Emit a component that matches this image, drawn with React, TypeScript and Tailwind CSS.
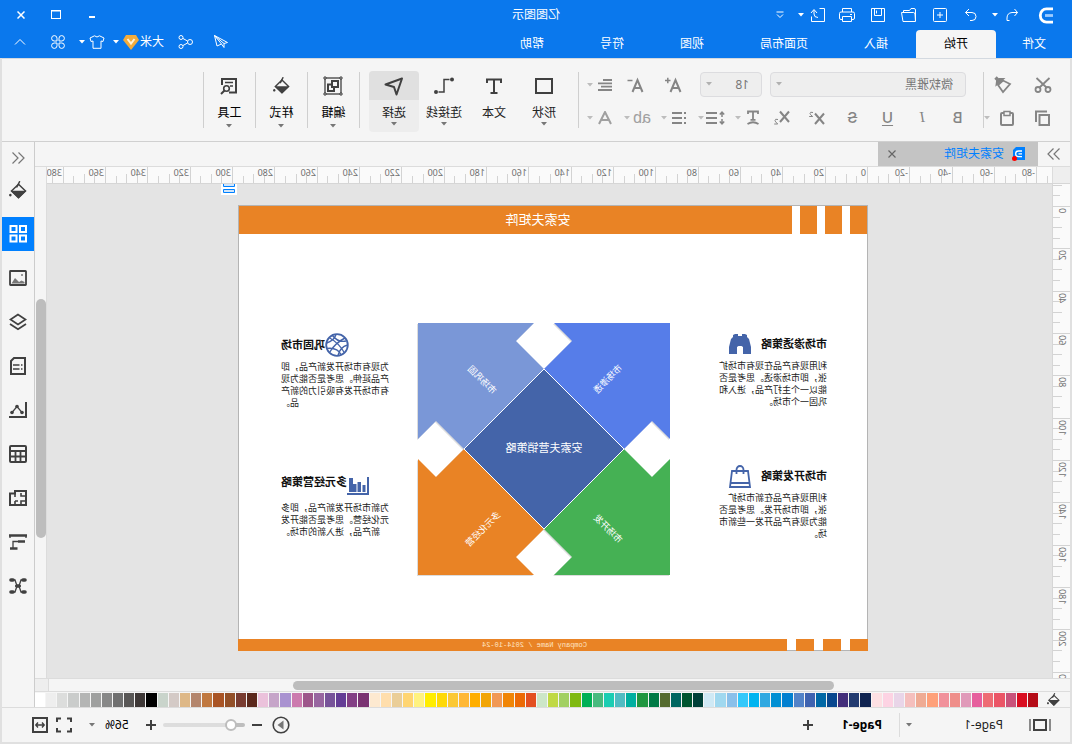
import type { ReactNode } from "react";

interface IconProps {
  w?: number;
  h?: number;
  sw?: number;
  children: ReactNode;
}

function Icon({ w = 16, h = 16, sw = 1, children }: IconProps) {
  return (
    <svg width={w} height={h} viewBox={`0 0 ${w} ${h}`} fill="none" stroke="currentColor" strokeWidth={sw} className="shrink-0" aria-hidden="true">
      {children}
    </svg>
  );
}

function Caret({ className = "" }: { className?: string }) {
  return (
    <svg width="6" height="4" viewBox="0 0 6 4" fill="currentColor" className={`shrink-0 ${className}`} aria-hidden="true">
      <path d="M0 0H6L3 3.5Z" />
    </svg>
  );
}

function BucketIcon({ w = 18 }: { w?: number }) {
  return (
    <svg width={w} height={w} viewBox="0 0 18 18" fill="none" stroke="currentColor" strokeWidth="1.5" className="shrink-0" aria-hidden="true">
      <path d="M8.5 3.2L15.5 10L8.5 16.8L1.5 10Z" />
      <path d="M2.5 10.5H14.5L8.5 16.5Z" fill="currentColor" />
      <path d="M7.2 0.2L10.4 6.5" />
      <path d="M16.6 12.8a1.3 1.3 0 1 0 .1 0z" fill="currentColor" stroke="none" />
    </svg>
  );
}

/* ---------- title bar ---------- */

const fileActions: { label: string; icon: ReactNode }[] = [
  { label: "重做", icon: <Icon><path d="M10 2L13.5 5.5L10 9M13.5 5.5H7A4 4 0 0 0 7 13.5H9" /></Icon> },
  { label: "新建", icon: <Icon><rect x="1.5" y="1.5" width="13" height="13" rx="1" /><path d="M8 5V11M5 8H11" /></Icon> },
  { label: "打开", icon: <Icon><path d="M1.5 14V3Q1.5 1.5 3 1.5H6L7.5 3.5H13.5V5.5M1.5 14.5L2 7Q2.2 5.5 3.5 5.5H15.5L14 14.5Z" /></Icon> },
  { label: "保存", icon: <Icon><path d="M1.5 1.5H14.5V14.5H1.5ZM4.5 2V8.5H11.5V2M9.5 3.5V6.5" /></Icon> },
  { label: "打印", icon: <Icon><path d="M3.5 5V1.5H12.5V5M3.5 12.5H2Q0.5 12.5 0.5 11V6.5Q0.5 5 2 5H14Q15.5 5 15.5 6.5V11Q15.5 12.5 14 12.5H12.5M3.5 9.5H12.5V14.5H3.5ZM3 7.5H5" /></Icon> },
];

function TitleBar() {
  return (
    <div className="grid h-[30px] grid-cols-[1fr_auto_1fr] items-center">
      <div className="flex items-center">
        <svg width="16" height="17" viewBox="0 0 16 17" fill="none" stroke="#fff" strokeWidth="2.8" className="ml-[18px]" aria-label="Edraw">
          <path d="M1 1.9H7.5A6.2 6.6 0 0 1 7.5 15.1H1" />
          <path d="M1 8.5H9" stroke="#9ccbff" />
        </svg>
        <button className="ml-4 flex h-6 w-5 items-center justify-center" aria-label="撤销">
          <Icon w={14} h={16}><path d="M4.5 2L1.5 5.5L4.5 9M1.5 5.5H7Q12 6 12 11V13.5H9.5" /></Icon>
        </button>
        <button className="ml-1 h-6" aria-label="撤销列表"><Caret /></button>
        <span className="w-[5px]" />
        {fileActions.map((a) => (
          <button key={a.label} className="flex h-6 w-[31px] items-center justify-center" aria-label={a.label}>
            {a.icon}
          </button>
        ))}
        <button className="flex h-6 w-7 items-center justify-center" aria-label="导出">
          <Icon><path d="M6.5 1.5H1.5V14.5H14.5V9.5M9 6L12 2.5L15 6M12 3V7Q12 10.5 8 10.5" /></Icon>
        </button>
        <button aria-label="导出选项"><Caret /></button>
        <button className="ml-2 flex h-6 w-5 items-center justify-center" aria-label="自定义">
          <Icon w={8} h={8}><path d="M0.5 1H7.5M1 3.5L4 6.5L7 3.5" /></Icon>
        </button>
      </div>
      <h1 className="text-xs">亿图图示</h1>
      <div className="flex justify-end pr-1">
        <button className="flex h-6 w-9 items-center justify-center" aria-label="最小化">
          <Icon w={8} h={8} sw={2}><path d="M1 6H7" /></Icon>
        </button>
        <button className="flex h-6 w-9 items-center justify-center" aria-label="最大化">
          <Icon w={10} h={10}><rect x="0.5" y="0.5" width="9" height="8" /><path d="M0 1H10" /></Icon>
        </button>
        <button className="flex h-6 w-[34px] items-center justify-center" aria-label="关闭">
          <Icon w={8} h={8} sw={1.5}><path d="M0.5 0.5L7.5 7.5M7.5 0.5L0.5 7.5" /></Icon>
        </button>
      </div>
    </div>
  );
}

const menus = ["文件", "开始", "插入", "页面布局", "视图", "符号", "帮助"];

function MenuBar() {
  return (
    <nav className="flex h-7 justify-between text-xs">
      <div className="flex">
        {menus.map((m) => (
          <button
            key={m}
            className={m === "开始" ? "rounded-t-sm bg-[#f5f5f5] px-7 text-black" : m === "文件" ? "w-[76px]" : "px-7"}
          >
            {m}
          </button>
        ))}
      </div>
      <div className="flex h-6 items-center">
        <button className="flex w-[35px] justify-center" aria-label="发送">
          <Icon w={14} h={14}><path d="M13.5 0.5L0.5 7.5L4 8.5L13.5 0.5L11 11L6.5 9L13.5 0.5M4 8.5V12.5L6.5 9" /></Icon>
        </button>
        <button className="flex w-[35px] justify-center" aria-label="分享">
          <Icon w={15} h={14}><circle cx="3" cy="7" r="2.5" /><circle cx="12" cy="2.5" r="2" /><circle cx="12" cy="11.5" r="2" /><path d="M5.5 6L10 3.5M5.5 8L10 10.5" /></Icon>
        </button>
        <button className="ml-1 flex items-center">
          大米
          <svg width="16" height="15" viewBox="0 0 16 15" className="ml-px" aria-hidden="true">
            <path d="M3 0H13L16 5L8 15L0 5Z" fill="#f3ac3c" />
            <path d="M4.5 4L8 8.5L11.5 4" fill="none" stroke="#fff3d8" strokeWidth="2" />
          </svg>
          <Caret className="ml-1" />
        </button>
        <button className="ml-2 flex items-center" aria-label="主题">
          <Icon w={16} h={14}><path d="M5.5 0.8L1 3L2 6.5L4 6V13.3H12V6L14 6.5L15 3L10.5 0.8Q8 3.2 5.5 0.8Z" /></Icon>
          <Caret className="ml-1" />
        </button>
        <button className="ml-1 flex w-[34px] justify-center" aria-label="应用">
          <Icon w={14} h={14}>
            <path d="M6 6H3.2A2.7 2.7 0 1 1 6 3.2ZM8 6H10.8A2.7 2.7 0 1 0 8 3.2ZM6 8H3.2A2.7 2.7 0 1 0 6 10.8ZM8 8H10.8A2.7 2.7 0 1 1 8 10.8Z" />
          </Icon>
        </button>
        <button className="flex w-[41px] justify-center" aria-label="收起功能区">
          <Icon w={12} h={8}><path d="M1 6.5L6 1.5L11 6.5" /></Icon>
        </button>
      </div>
    </nav>
  );
}

/* ---------- ribbon ---------- */

function Divider() {
  return <div className="mt-[13px] h-14 w-px shrink-0 bg-[#cfcfcf]" />;
}

function Split({ label, children }: { label: string; children: ReactNode }) {
  return (
    <button className="flex h-[25px] shrink-0 items-center" aria-label={label}>
      <span className="flex w-6 justify-center">{children}</span>
      <Caret className="text-[#bdbdbd]" />
    </button>
  );
}

interface ToolProps {
  label: string;
  caret?: boolean;
  active?: boolean;
  narrow?: boolean;
  children: ReactNode;
}

function Tool({ label, caret = true, active, narrow, children }: ToolProps) {
  return (
    <button className={`mt-3 flex h-[61px] shrink-0 flex-col items-center rounded-sm text-xs ${narrow ? "w-[51px] text-black" : "w-[50px] text-[#222]"} ${active ? "bg-[#ededed]" : ""}`}>
      <span className={`flex h-[29px] w-full items-center justify-center rounded-t-sm text-[#404040] ${active ? "bg-[#e0e0e0]" : ""}`}>{children}</span>
      <span className="mt-1 leading-[18px] whitespace-nowrap">{label}</span>
      {caret && <Caret className={narrow ? "mt-0.5 text-[#777]" : "text-[#777]"} />}
    </button>
  );
}

const glyph = "w-[35px] text-[15px] leading-none font-medium";

function Ribbon() {
  return (
    <div className="flex h-[84px] shrink-0 border-t border-b border-t-[#d3d9e0] border-b-[#d0d0d0] bg-[#f5f5f5] text-[#858585]">
      <div className="flex w-[86px] shrink-0 flex-col gap-2 pt-[13px] pl-[7px]">
        <div className="flex h-[25px] items-center">
          <button className="flex w-10 justify-center" aria-label="剪切">
            <Icon w={18} h={18} sw={1.8}><circle cx="4" cy="13.5" r="2.5" /><circle cx="14" cy="13.5" r="2.5" /><path d="M2.5 2L12.5 11.5M15.5 2L5.5 11.5" /></Icon>
          </button>
          <button className="flex w-[39px] justify-center" aria-label="格式刷">
            <Icon w={18} h={18} sw={1.8}><path d="M2 8L9 4.5L14 9L9 16Z" /><path d="M9 3L15.5 8.5L15 4.5L12.5 3Z" fill="currentColor" /><path d="M13.5 4.5L16.5 1.5" strokeWidth="3.4" /></Icon>
          </button>
        </div>
        <div className="flex h-[25px] items-center">
          <button className="flex w-10 justify-center" aria-label="复制">
            <Icon sw={2}><rect x="2" y="5" width="9.5" height="10" /><path d="M4 1.5H15V12" /></Icon>
          </button>
          <button className="flex w-[34px] justify-center" aria-label="粘贴">
            <Icon sw={2}><rect x="2" y="3" width="12" height="12" rx="1" /><path d="M5 1.5H11V5.5H5Z" strokeWidth="1.5" fill="#f5f5f5" /></Icon>
          </button>
          <button aria-label="粘贴选项"><Caret className="text-[#bdbdbd]" /></button>
        </div>
      </div>
      <Divider />
      <div className="flex w-[404px] shrink-0 flex-col gap-2 pt-[13px]">
        <div className="flex h-[25px] items-center pl-[17px]">
          <label className="relative flex">
            <select aria-label="字体" className="h-[25px] w-[196px] appearance-none rounded-sm border border-[#dcdcdf] bg-[#eeeeee] pl-3 text-xs text-[#777]">
              <option>微软雅黑</option>
            </select>
            <Caret className="pointer-events-none absolute top-2.5 right-1.5 text-[#b0b0b0]" />
          </label>
          <label className="relative ml-2 flex">
            <select aria-label="字号" className="h-[25px] w-[62px] appearance-none rounded-sm border border-[#dcdcdf] bg-[#eeeeee] pl-3 text-xs text-[#777]">
              <option>18</option>
            </select>
            <Caret className="pointer-events-none absolute top-2.5 right-1.5 text-[#b0b0b0]" />
          </label>
          <button className="ml-2 flex w-[37px] justify-center" aria-label="增大字号">
            <Icon w={17} h={16} sw={2}><path d="M1.5 15L6.5 3L11.5 15M3.5 11H9.5" /><path d="M11.5 3.5H17M14.2 0.8V6.2" strokeWidth="1.5" /></Icon>
          </button>
          <button className="flex w-[38px] justify-center" aria-label="减小字号">
            <Icon w={17} h={16} sw={2}><path d="M1.5 15L6.5 3L11.5 15M3.5 11H9.5" /><path d="M11.5 3.5H16.5" strokeWidth="1.5" /></Icon>
          </button>
          <Split label="对齐"><Icon w={14} h={12} sw={2}><path d="M0 1H9M0 4.3H14M0 7.6H11M0 11H14" strokeWidth="1.8" /></Icon></Split>
        </div>
        <div className="flex h-[25px] items-center pl-2 font-['Inter',sans-serif]">
          <button className={glyph} aria-label="加粗">B</button>
          <button className={`${glyph} font-['Liberation_Serif',serif] italic`} aria-label="斜体">I</button>
          <button className={`${glyph} underline underline-offset-2`} aria-label="下划线">U</button>
          <button className={`${glyph} line-through`} aria-label="删除线">S</button>
          <button className="flex w-[35px] justify-center" aria-label="上标">
            <Icon w={16} h={14} sw={2}><path d="M1 2.5L10 13M10 2.5L1 13" /><path d="M12 1.5Q15 0.5 15 2.5Q15 3.5 12.3 5.5H15.8" strokeWidth="1" /></Icon>
          </button>
          <button className="flex w-[35px] justify-center" aria-label="下标">
            <Icon w={16} h={15} sw={2}><path d="M1 1.5L10 12M10 1.5L1 12" /><path d="M12 9.5Q15 8.5 15 10.5Q15 11.5 12.3 14H15.8" strokeWidth="1" /></Icon>
          </button>
          <div className="flex gap-[7px]">
            <Split label="文字方向"><Icon w={14} h={15} sw={1.8}><path d="M2 4V1.5H12V4M7 1.5V9.5M4.5 9.8H9.5M1.5 14Q7 10.5 12.5 14" /></Icon></Split>
            <Split label="行距"><Icon w={19} h={14} sw={1.5}><path d="M8 2H19M8 7H19M8 12H19" strokeWidth="2" /><path d="M3 1V6M0.8 3.5L3 1.2L5.2 3.5M3 8V13M0.8 10.5L3 12.8L5.2 10.5" /></Icon></Split>
            <Split label="项目符号"><Icon w={14} h={12} sw={2}><path d="M0 1H2M4 1H14M0 6H2M4 6H14M0 11H2M4 11H14" /></Icon></Split>
            <Split label="高亮"><span className="font-['Liberation_Sans',sans-serif] text-base leading-none text-[#a0a0a0]">ab</span></Split>
            <Split label="字体颜色"><Icon w={14} h={14} sw={2}><path d="M1 13L7 1L13 13M3.5 9H10.5" stroke="#a0a0a0" /></Icon></Split>
          </div>
        </div>
      </div>
      <Divider />
      <div className="flex shrink-0 pr-[9px] pl-[9px]">
        <Tool label="形状"><Icon w={18} h={16} sw={2}><rect x="1" y="1" width="16" height="14" /></Icon></Tool>
        <Tool label="文本" caret={false}><Icon w={16} h={16} sw={2}><path d="M1 5V1.5H15V5M8 1.5V15M4.5 15H11.5" /></Icon></Tool>
        <Tool label="连接线">
          <Icon w={20} h={18} sw={1.5}><path d="M4.5 2.5H10V15H15.5" /><circle cx="2" cy="2.5" r="2" fill="currentColor" stroke="none" /><circle cx="18" cy="15" r="2" fill="currentColor" stroke="none" /></Icon>
        </Tool>
        <Tool label="选择" active><Icon w={20} h={20} sw={2}><path d="M2 2.5L18.5 8.5L10 11L7.5 18.5Z" strokeLinejoin="round" /></Icon></Tool>
      </div>
      <Divider />
      <Tool label="编辑" narrow>
        <Icon w={20} h={20} sw={1.3}>
          <rect x="2" y="2" width="16" height="16" />
          <path d="M5 5H11V11H5ZM12 8.5H15V15H9V12" strokeWidth="2" />
          <path d="M1 1H3V3H1ZM17 1H19V3H17ZM1 17H3V19H1ZM17 17H19V19H17Z" strokeWidth="1" fill="#f5f5f5" />
        </Icon>
      </Tool>
      <Divider />
      <Tool label="样式" narrow><BucketIcon w={17} /></Tool>
      <Divider />
      <Tool label="工具" narrow>
        <Icon w={18} h={18} sw={2}><path d="M9 15.5H2V2H16V8" /><path d="M5 5.5H13M5 9H8" strokeWidth="1.5" /><circle cx="11.5" cy="11.5" r="2.8" strokeWidth="1.6" /><path d="M13.5 13.5L17 17" /></Icon>
      </Tool>
      <Divider />
    </div>
  );
}

/* ---------- rulers ---------- */

// pixels per millimetre at the current zoom
const SCALE = 2.1165;

function range(from: number, to: number, step: number) {
  return Array.from({ length: Math.floor((to - from) / step) + 1 }, (_, i) => from + i * step);
}

function HRuler() {
  return (
    <svg className="h-4 min-w-0 flex-1" width="100%" height="16" aria-hidden="true">
      {range(-85, 600, 5).map((v) => {
        const x = Math.round(184 + v * SCALE) + 0.5;
        const top = v % 20 === 0 ? 0 : v % 10 === 0 ? 7 : 9;
        return <path key={v} d={`M${x} ${top}V16`} stroke="#d3d3d3" />;
      })}
      {range(-80, 380, 20).map((v) => (
        <text key={v} x={Math.round(184 + v * SCALE) + 2} y="9" fontSize="9" fill="#707070">{v}</text>
      ))}
    </svg>
  );
}

function VRuler() {
  return (
    <div className="relative w-[18px] shrink-0 overflow-hidden border-r border-[#d6d6d6] bg-[#fafafa]">
      <svg className="absolute inset-0" width="17" height="100%" aria-hidden="true">
        {range(-10, 500, 5).map((v) => {
          const y = Math.round(22 + v * SCALE) + 0.5;
          const left = v % 20 === 0 ? 0 : v % 10 === 0 ? 8 : 10;
          return <path key={v} d={`M${left} ${y}H17`} stroke="#d3d3d3" />;
        })}
        {range(0, 220, 20).map((v) => (
          <text key={v} transform={`translate(11 ${Math.round(22 + v * SCALE) + 2}) rotate(-90)`} textAnchor="end" fontSize="9" fill="#707070">{v}</text>
        ))}
      </svg>
    </div>
  );
}

/* ---------- slide ---------- */

function Matrix() {
  return (
    <svg width="252" height="252" viewBox="0 0 252 252" className="absolute top-[118px] left-[198px] overflow-visible" fontSize="9" fill="#fff" textAnchor="middle">
      <g fill="#dcdcdc" transform="translate(1 1)">
        <path d="M0 0H116L98 18L126 46L46 126L18 98L0 116Z" />
        <path d="M252 0H136L154 18L126 46L206 126L234 98L252 116Z" />
        <path d="M0 252H116L98 234L126 206L46 126L18 154L0 136Z" />
        <path d="M252 252H136L154 234L126 206L206 126L234 154L252 136Z" />
      </g>
      <path d="M0 0H116L98 18L126 46L46 126L18 98L0 116Z" fill="#567de9" />
      <path d="M252 0H136L154 18L126 46L206 126L234 98L252 116Z" fill="#7a97d7" />
      <path d="M0 252H116L98 234L126 206L46 126L18 154L0 136Z" fill="#45b154" />
      <path d="M252 252H136L154 234L126 206L206 126L234 154L252 136Z" fill="#e98325" />
      <path d="M126 46L206 126L126 206L46 126Z" fill="#4464a9" stroke="#fff" />
      <text x="126" y="129" fontSize="11">安索夫营销策略</text>
      <text transform="translate(62 56) rotate(45)" y="3">市场渗透</text>
      <text transform="translate(188 57) rotate(-45)" y="3">市场巩固</text>
      <text transform="translate(62 206) rotate(-45)" y="3">市场开发</text>
      <text transform="translate(187 206) rotate(45)" y="3">多元化经营</text>
    </svg>
  );
}

interface NoteProps {
  place: string;
  title: string;
  lines: string[];
  icon: ReactNode;
  right?: boolean;
  loose?: boolean;
}

function Note({ place, title, lines, icon, right, loose }: NoteProps) {
  return (
    <section className={`absolute text-[#222] ${place} ${right ? "text-right" : ""}`}>
      <div className={`flex h-6 items-center text-[#4464a9] ${right ? "justify-end" : "flex-row-reverse justify-end gap-2.5"}`}>
        {icon}
        <h3 className="text-[11px] leading-6 font-bold text-[#111]">{title}</h3>
      </div>
      <p className={`text-[9px] leading-3 whitespace-nowrap ${loose ? "mt-2" : "mt-1"}`}>
        {lines.map((l) => (
          <span key={l} className="block">{l}</span>
        ))}
      </p>
    </section>
  );
}

function Slide() {
  return (
    <article className="relative h-[446px] w-[630px] shrink-0 bg-white outline -outline-offset-1 outline-[#b4b4b4]">
      <header className="flex h-[29px] items-center gap-2 text-white">
        <span className="h-full w-[18px] bg-[#e98325]" />
        <span className="h-full w-[17px] bg-[#e98325]" />
        <span className="h-full w-[17px] bg-[#e98325]" />
        <h2 className="h-full flex-1 bg-[#e98325] pr-[46px] text-center text-[13px] leading-[29px]">安索夫矩阵</h2>
      </header>
      <Note
        place="top-[127px] left-[41px]"
        title="市场渗透策略"
        lines={["利用现有产品在现有市场扩", "张，即市场渗透。思考是否", "能以一个主打产品，进入和", "巩固一个市场。"]}
        icon={
          <svg width="22" height="20" viewBox="0 0 22 20" fill="currentColor" aria-hidden="true">
            <path d="M4 1L6 0H9V2H13V0H16L18 1V3L20 5L22 13V20H14V13L12.5 12H9.5L8 13V20H0V13L2 5L4 3Z" />
          </svg>
        }
      />
      <Note
        place="top-[259px] left-[41px]"
        title="市场开发策略"
        lines={["利用现有产品在新市场扩", "张，即市场开发。思考是否", "能为现有产品开发一些新市", "场。"]}
        icon={<Icon w={22} h={23} sw={1.8}><path d="M3 6H19L21 22H1ZM2 18H20M7.5 9V5A3.5 4 0 0 1 14.5 5V9" /></Icon>}
      />
      <Note
        right
        place="top-[128px] right-[43px]"
        title="巩固市场"
        lines={["为现有市场开发新产品，即", "产品延伸。思考是否能为现", "有市场开发有吸引力的新产", "品。"]}
        icon={
          <Icon w={24} h={24} sw={1.8}>
            <circle cx="12" cy="12" r="10.8" />
            <path d="M20 4.5Q10 10 4.5 20M4 5Q14 10 19.5 19.5M13 1.5Q15 8 22.5 10M1.5 12Q9 14 11 22.5M3 8Q11 10 17 2M7.5 22Q12 14 22 15.5" strokeWidth="1.4" />
          </Icon>
        }
      />
      <Note
        right
        loose
        place="top-[265px] right-[43px]"
        title="多元经营策略"
        lines={["为新市场开发新产品，即多", "元化经营。思考是否能开发", "新产品，进入新的市场。"]}
        icon={
          <svg width="22" height="18" viewBox="0 0 22 18" fill="currentColor" className="mt-2" aria-hidden="true">
            <path d="M0 0H2V16H22V18H0ZM3.5 8H6.5V15H3.5ZM8 5H11.5V15H8ZM12.5 7H16V15H12.5ZM16 1H20V15H16Z" />
          </svg>
        }
      />
      <Matrix />
      <footer className="absolute inset-x-0 bottom-0 flex h-3 gap-[9px]">
        <span className="w-[18px] bg-[#e98325]" />
        <span className="w-[18px] bg-[#e98325]" />
        <span className="w-[18px] bg-[#e98325]" />
        <p className="flex-1 bg-[#e98325] pr-11 text-center font-['Liberation_Mono',monospace] text-[7px] leading-3 text-[#ffe3c4]">Company Name / 2014-10-24</p>
      </footer>
    </article>
  );
}

/* ---------- right hand panel ---------- */

const panels: { label: string; icon: ReactNode }[] = [
  { label: "填充", icon: <BucketIcon /> },
  { label: "符号库", icon: <Icon w={18} h={18} sw={2}><path d="M1 1H7V7H1ZM10.5 1H16.5V7H10.5ZM1 10.5H7V16.5H1ZM10.5 10.5H16.5V16.5H10.5Z" /></Icon> },
  { label: "图片", icon: <Icon w={18} h={16} sw={1.8}><rect x="1" y="1" width="16" height="14" rx="0.5" /><path d="M2.5 13.5V12L5.5 10.5L8 12L12 8L15.5 13.5Z" fill="#777" stroke="none" /><circle cx="5" cy="5" r="1" fill="#777" stroke="none" /></Icon> },
  { label: "图层", icon: <Icon w={18} h={18} sw={1.8}><path d="M9 1.5L16.5 6.5L9 11.5L1.5 6.5Z" /><path d="M1 11L9 16.2L17 11" /></Icon> },
  { label: "页面", icon: <Icon w={16} h={18} sw={2}><path d="M1 1H12L15 4V17H1Z" /><path d="M3.5 8H5M6.5 8H13M3.5 12H5M6.5 12H13" strokeWidth="1.6" /></Icon> },
  { label: "图表", icon: <Icon w={18} h={18} sw={2}><path d="M1 1V16H18" /><path d="M5 11.5L10 5.5L15 11.5" strokeWidth="1.2" /><circle cx="5" cy="11.5" r="1.8" fill="currentColor" stroke="none" /><circle cx="10" cy="5.5" r="1.8" fill="currentColor" stroke="none" /><circle cx="15" cy="11.5" r="1.8" fill="currentColor" stroke="none" /></Icon> },
  { label: "表格", icon: <Icon w={18} h={18} sw={2}><rect x="1" y="1" width="16" height="16" rx="1" /><path d="M1 6H17M1 11.5H17M6.5 6V17M11.5 6V17" strokeWidth="1.8" /></Icon> },
  { label: "平面图", icon: <Icon w={18} h={16} sw={2}><path d="M1 1H12V3.5H17V15H1Z" /><path d="M1 6H6V3M1 11H6V15M12 1V7M12 11V15M9 11H12" strokeWidth="1.6" /></Icon> },
  { label: "甘特图", icon: <Icon w={18} h={16} sw={2.6}><path d="M0 1.5H18M2 7.5H9M9.5 14.5H17" /><path d="M9 7.5H14V14M1 1V4M17 1V4" strokeWidth="1.3" /></Icon> },
  { label: "思维导图", icon: <Icon w={18} h={16} sw={1.3}><path d="M4 2H6L8 8L6 14H4M14 2H12L10 8L12 14H14M6 8H12" /><path d="M2 2H4M14 2H16M2 14H4M14 14H16M8 8H10" strokeWidth="3.6" strokeLinecap="round" /></Icon> },
];

function SidePanel() {
  return (
    <aside className="flex w-[33px] shrink-0 flex-col border-l border-[#cccccc] bg-[#f5f5f5] text-[#404040]">
      <button className="flex h-[31px] shrink-0 items-center justify-center text-[#777]" aria-label="展开面板">
        <Icon w={14} h={12} sw={1.2}><path d="M6.5 0.5L1 6L6.5 11.5M12.5 0.5L7 6L12.5 11.5" /></Icon>
      </button>
      <div className="flex flex-col gap-2.5">
        {panels.map((p) => (
          <button
            key={p.label}
            aria-label={p.label}
            className={`flex h-[34px] items-center justify-center ${p.label === "符号库" ? "bg-[#0080ff] text-white" : ""}`}
          >
            {p.icon}
          </button>
        ))}
      </div>
    </aside>
  );
}

/* ---------- bottom bars ---------- */

const palette = [
  "#b50b16", "#d90c1f", "#c9527a", "#eb5566", "#ee6c74", "#e65f9d", "#e09ab9", "#ef8e8a", "#f1919b", "#fea07a",
  "#efab94", "#f5bfbd", "#e9d5e8", "#fdd3e3", "#fde0e3", "#0f2350", "#223a70", "#432e7a", "#08478e", "#0168a6",
  "#3f63b0", "#5383c8", "#0280d0", "#0290d3", "#2fa8e1", "#00b4f0", "#32c8fa", "#8ac0ea", "#a0d8ef", "#cfe9f5",
  "#004038", "#005530", "#006660", "#556b2f", "#007a45", "#209640", "#00afa0", "#50bcc2", "#1bcdb2", "#48ba7e",
  "#00b056", "#7fb910", "#a2d062", "#c0d945", "#cce6c8", "#e35021", "#ec6a05", "#f08505", "#f19955", "#f2a505",
  "#ffae00", "#ffb835", "#fbc833", "#ffd905", "#ffed00", "#fff280", "#ffd572", "#eace98", "#ffdeac", "#fde9d0",
  "#7a3373", "#823f84", "#643d95", "#775399", "#9866a0", "#9d568a", "#cc7aae", "#a992d0", "#c6a5c9", "#ebc2db",
  "#5a281b", "#793c30", "#935028", "#a95425", "#c0783f", "#b4866d", "#deb887", "#d4cac6", "#c9d4cb", "#000000",
  "#3e3837", "#595756", "#707070", "#888888", "#9fa09f", "#b4b5b4", "#cacccb", "#dcdddc", "#eeeeee", "#ffffff",
];

function ColorBar() {
  return (
    <div className="flex h-4 shrink-0 items-center border-t border-[#dcdcdc] bg-[#f5f5f5] text-[#404040]">
      <button className="flex w-8 shrink-0 justify-center" aria-label="填充颜色"><BucketIcon w={13} /></button>
      <div className="flex h-3.5 flex-1 gap-px">
        {palette.map((c) => (
          <button key={c} aria-label={c} className="flex-1" style={{ backgroundColor: c }} />
        ))}
      </div>
    </div>
  );
}

function StatusBar() {
  return (
    <footer className="flex h-[35px] shrink-0 items-center justify-between border-t border-[#dcdcdc] bg-[#f5f5f5] text-xs text-[#404040]">
      <div className="flex items-center">
        <button className="ml-[19px]" aria-label="页面面板">
          <Icon w={22} h={12} sw={2}><rect x="5" y="1" width="12" height="10" /><path d="M1 0V12M21 0V12" stroke="#8a8a8a" /></Icon>
        </button>
        <label className="relative ml-[22px] flex items-center">
          <select aria-label="页面" className="h-6 w-[107px] appearance-none bg-transparent pl-1 text-[#222]">
            <option>Page-1</option>
          </select>
          <Caret className="pointer-events-none absolute right-1.5 text-[#777]" />
        </label>
        <div className="h-6 w-px bg-[#dcdcdc]" />
        <button className="ml-[17px] w-[46px] text-left font-bold text-black">Page-1</button>
        <button className="ml-[23px]" aria-label="新增页面"><Icon w={10} h={10} sw={2}><path d="M5 0V10M0 5H10" /></Icon></button>
      </div>
      <div className="flex items-center">
        <button aria-label="播放">
          <Icon w={18} h={18} sw={1.6}><circle cx="9" cy="9" r="7.8" /><path d="M6.5 4.5L12.5 9L6.5 13.5Z" fill="#777" stroke="none" /></Icon>
        </button>
        <button className="ml-2.5" aria-label="缩小"><Icon w={10} h={10} sw={2}><path d="M0 5H10" /></Icon></button>
        <input
          type="range"
          aria-label="缩放"
          defaultValue={11}
          className="ml-[7px] h-1 w-[82px] appearance-none rounded-full bg-linear-to-r from-[#bdbdbd] from-15% to-[#dddddd] to-15% [&::-webkit-slider-thumb]:h-3 [&::-webkit-slider-thumb]:w-3 [&::-webkit-slider-thumb]:appearance-none [&::-webkit-slider-thumb]:rounded-full [&::-webkit-slider-thumb]:border-2 [&::-webkit-slider-thumb]:border-[#bdbdbd] [&::-webkit-slider-thumb]:bg-white"
        />
        <button className="ml-[7px]" aria-label="放大"><Icon w={10} h={10} sw={2}><path d="M5 0V10M0 5H10" /></Icon></button>
        <button className="ml-[17px] flex items-center text-black">
          56%
          <Caret className="ml-2.5 text-[#777]" />
        </button>
        <button className="ml-[17px]" aria-label="全屏"><Icon w={16} h={16} sw={2}><path d="M1 5V1.5H5M11 1.5H15V5M15 11V14.5H11M5 14.5H1V11" /></Icon></button>
        <button className="mr-[30px] ml-2" aria-label="适应宽度">
          <Icon w={16} h={16} sw={2}><rect x="1" y="1" width="14" height="14" /><path d="M4 8H12M6 5.5L3.8 8L6 10.5M10 5.5L12.2 8L10 10.5" strokeWidth="1.4" /></Icon>
        </button>
      </div>
    </footer>
  );
}

export default function App() {
  return (
    <div className="flex h-screen -scale-x-100 flex-col overflow-hidden bg-[#e0e0e0] font-['Noto_Sans','Noto_Sans_CJK_SC',sans-serif]">
      <div className="shrink-0 bg-[#0a78ed] text-white">
        <TitleBar />
        <MenuBar />
      </div>
      <div className="flex min-h-0 flex-1 flex-col border-x-2 border-b-2 border-[#e0e0e0]">
        <Ribbon />
        <div className="flex min-h-0 flex-1">
          <main className="flex min-w-0 flex-1 flex-col">
            <div className="flex h-[25px] shrink-0 border-b border-[#dcdcdc] bg-[#f5f5f5]">
              <button className="flex w-8 items-center justify-center text-[#777]" aria-label="展开符号库">
                <Icon w={14} h={12} sw={1.2}><path d="M1.5 0.5L7 6L1.5 11.5M7.5 0.5L13 6L7.5 11.5" /></Icon>
              </button>
              <div className="flex w-40 items-center bg-[#c4c4c4] text-xs text-[#0080ff]">
                <svg width="14" height="14" viewBox="0 0 14 14" className="ml-3" aria-hidden="true">
                  <path d="M1 0H10L13 3V13H1Z" fill="#0080ff" />
                  <path d="M4 4H7.5A2.8 2.8 0 0 1 7.5 9.7H4M4 6.9H7.5" fill="none" stroke="#fff" strokeWidth="1.3" />
                  <circle cx="11.5" cy="11.5" r="2.5" fill="#f00" />
                </svg>
                <span className="ml-2">安索夫矩阵</span>
                <button className="ml-auto flex w-7 justify-center text-[#666]" aria-label="关闭文档">
                  <Icon w={8} h={8} sw={1.2}><path d="M0.5 0.5L7.5 7.5M7.5 0.5L0.5 7.5" /></Icon>
                </button>
              </div>
            </div>
            <div className="flex min-h-0 flex-1">
              <div className="flex min-w-0 flex-1 flex-col">
                <div className="flex h-[17px] shrink-0 border-b border-[#d6d6d6] bg-[#fafafa]">
                  <div className="w-[18px] shrink-0 border-r border-[#dcdcdc] bg-[#eeeeee]" />
                  <HRuler />
                </div>
                <div className="flex min-h-0 flex-1">
                  <VRuler />
                  <div className="flex min-w-0 flex-1 items-start overflow-hidden bg-[#e4e4e4] pl-[184px]">
                    <div className="flex shrink-0 items-start">
                      <div className="pt-[21px]"><Slide /></div>
                      <button className="ml-px bg-white px-0.5 pb-0.5" aria-label="浮动工具">
                        <Icon w={12} h={9}><path d="M0.5 0V2.5H11.5V0M0.5 5.5H11.5V8.5H0.5Z" stroke="#0080ff" fill="#cfe5fb" /></Icon>
                      </button>
                    </div>
                  </div>
                </div>
              </div>
              <div className="w-3 shrink-0 border-l border-[#dcdcdc] bg-[#f5f5f5] pt-[132px]">
                <div className="h-[239px] w-2.5 rounded-full bg-[#bdbdbd]" />
              </div>
            </div>
            <div className="flex h-[13px] shrink-0 items-center border-t border-[#dcdcdc] bg-[#f5f5f5]">
              <div className="ml-[236px] h-[9px] w-[541px] rounded-full bg-[#bdbdbd]" />
              <div className="ml-auto h-full w-3.5 border-l border-[#dcdcdc] bg-[#eeeeee]" />
            </div>
            <ColorBar />
          </main>
          <SidePanel />
        </div>
        <StatusBar />
      </div>
    </div>
  );
}
